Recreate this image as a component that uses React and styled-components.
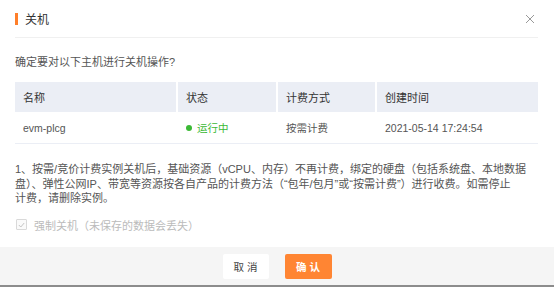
import styled, { createGlobalStyle } from "styled-components";

const GlobalStyle = createGlobalStyle`
  html, body {
    margin: 0;
    padding: 0;
    background: #ffffff;
  }
  body {
    font-family: "Liberation Sans", "Noto Sans CJK SC", sans-serif;
  }
`;

const Dialog = styled.div`
  width: 554px;
  height: 287px;
  box-sizing: border-box;
  display: flex;
  flex-direction: column;
  background: #ffffff;
  border-bottom: 2px solid #8c8c8c;
`;

const Header = styled.div`
  height: 38px;
  margin: 0 16px 0 15px;
  border-bottom: 1px solid #f0f0f0;
  display: flex;
  align-items: center;
  justify-content: space-between;
  box-sizing: border-box;
`;

const Title = styled.div`
  display: flex;
  align-items: center;
  gap: 7px;
  font-size: 12px;
  color: #333333;
`;

const TitleBar = styled.span`
  width: 3px;
  height: 12px;
  background: #ff7f2a;
`;

const CloseButton = styled.button`
  border: none;
  background: none;
  padding: 0;
  margin-right: 3px;
  width: 10px;
  height: 10px;
  display: flex;
  cursor: pointer;
`;

const Body = styled.div`
  flex: 1;
  padding: 16px 16px 0 15px;
  display: flex;
  flex-direction: column;
`;

const Question = styled.div`
  font-size: 11px;
  line-height: 16px;
  color: #555555;
  margin-bottom: 12px;
`;

const Table = styled.div`
  display: grid;
  grid-template-columns: 161px 100px 99px 1fr;
`;

const HeadCell = styled.div`
  height: 30px;
  background: #ebeef5;
  display: flex;
  align-items: center;
  padding-left: 8px;
  font-size: 11px;
  color: #333333;
  border-left: ${(p) => (p.first ? "none" : "2px solid #ffffff")};
`;

const Cell = styled.div`
  height: 31px;
  border-bottom: 1px solid #ebeef5;
  display: flex;
  align-items: center;
  padding-left: ${(p) => (p.first ? "8px" : "10px")};
  font-size: 10.5px;
  color: ${(p) => p.color || "#555555"};
  gap: 5px;
`;

const Dot = styled.span`
  width: 6px;
  height: 6px;
  border-radius: 50%;
  background: #3bb935;
`;

const Notes = styled.div`
  margin-top: 18px;
  font-size: 11px;
  line-height: 14.5px;
  color: #555555;
`;

const NoteLine = styled.div`
  white-space: nowrap;
`;

const CheckRow = styled.label`
  margin-top: 11px;
  display: flex;
  align-items: center;
  gap: 7px;
  font-size: 11px;
  color: #bbbbbb;
`;

const CheckBox = styled.span`
  width: 9px;
  height: 9px;
  margin-left: 1px;
  border: 1px solid #d9d9d9;
  border-radius: 1px;
  display: flex;
  align-items: center;
  justify-content: center;
  background: #fafafa;
`;

const Footer = styled.div`
  height: 38px;
  margin-top: auto;
  background: #f5f5f5;
  display: flex;
  align-items: center;
  justify-content: center;
  gap: 16px;
`;

const Button = styled.button`
  height: 25px;
  width: ${(p) => (p.primary ? "47px" : "46px")};
  border: none;
  border-radius: 2px;
  font-family: inherit;
  font-size: 10.5px;
  letter-spacing: 3px;
  padding: 0 0 0 3px;
  background: ${(p) => (p.primary ? "#ff8533" : "#ffffff")};
  color: ${(p) => (p.primary ? "#ffffff" : "#444444")};
  font-weight: ${(p) => (p.primary ? 700 : 400)};
  cursor: pointer;
`;

export default function App() {
  return (
    <>
      <GlobalStyle />
      <Dialog>
        <Header>
          <Title>
            <TitleBar />
            关机
          </Title>
          <CloseButton aria-label="关闭">
            <svg width="10" height="10" viewBox="0 0 10 10">
              <path d="M1 1 L9 9 M9 1 L1 9" stroke="#999999" strokeWidth="1" />
            </svg>
          </CloseButton>
        </Header>
        <Body>
          <Question>确定要对以下主机进行关机操作?</Question>
          <Table>
            <HeadCell first>名称</HeadCell>
            <HeadCell>状态</HeadCell>
            <HeadCell>计费方式</HeadCell>
            <HeadCell>创建时间</HeadCell>
            <Cell first>evm-plcg</Cell>
            <Cell color="#3bb935">
              <Dot />
              运行中
            </Cell>
            <Cell>按需计费</Cell>
            <Cell>2021-05-14 17:24:54</Cell>
          </Table>
          <Notes>
            <NoteLine>
              1、按需/竞价计费实例关机后，基础资源（vCPU、内存）不再计费，绑定的硬盘（包括系统盘、本地数据
            </NoteLine>
            <NoteLine>
              盘）、弹性公网IP、带宽等资源按各自产品的计费方法（“包年/包月”或“按需计费”）进行收费。如需停止
            </NoteLine>
            <NoteLine>计费，请删除实例。</NoteLine>
          </Notes>
          <CheckRow>
            <CheckBox>
              <svg width="7" height="6" viewBox="0 0 7 6">
                <path d="M0.8 3 L2.8 5 L6.2 1" stroke="#c4c4c4" strokeWidth="1" fill="none" />
              </svg>
            </CheckBox>
            强制关机（未保存的数据会丢失）
          </CheckRow>
        </Body>
        <Footer>
          <Button>取消</Button>
          <Button primary>确认</Button>
        </Footer>
      </Dialog>
    </>
  );
}
